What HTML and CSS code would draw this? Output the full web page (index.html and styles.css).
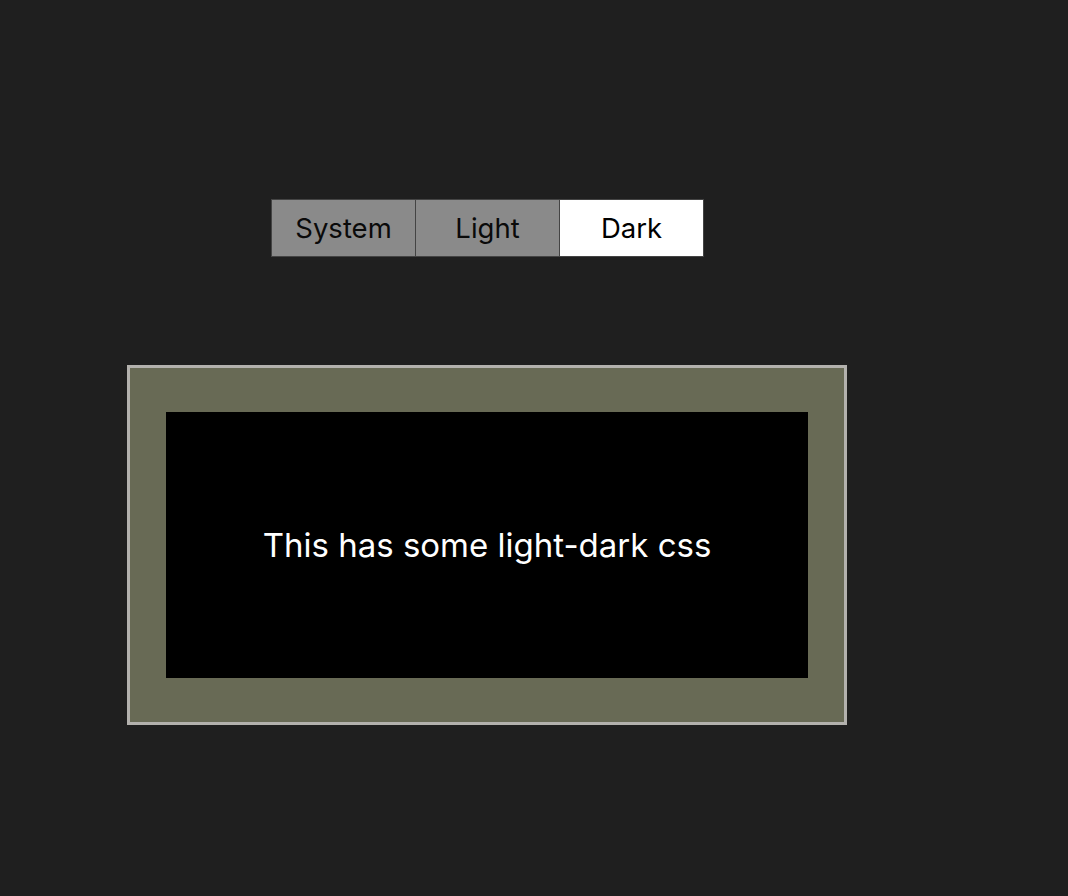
FILE: index.html
```html
<!DOCTYPE html>
<html>
<head>
<meta charset="utf-8">
<link rel="stylesheet" href="styles.css">
</head>
<body>
<main class="page">
  <div class="switcher">
    <button class="opt">System</button>
    <button class="opt">Light</button>
    <button class="opt active">Dark</button>
  </div>
  <div class="frame">
    <div class="panel">This has some light-dark css</div>
  </div>
</main>
</body>
</html>
```
FILE: styles.css
```css
html, body {
  margin: 0;
  padding: 0;
  background: #1f1f1f;
  font-family: "Inter", "Noto Sans", sans-serif;
}
.page {
  width: 720px;
  margin-left: 127px;
  padding-top: 199px;
  display: flex;
  flex-direction: column;
  align-items: center;
  gap: 108px;
}
.switcher {
  display: flex;
  margin-left: 1px;
}
.opt {
  width: 145px;
  height: 58px;
  margin: 0 0 0 -1px;
  background: #8a8a8a;
  color: #0a0a0a;
  border: 1px solid #444;
  font-family: inherit;
  font-size: 27.5px;
  padding: 0;
}
.opt:first-child { margin-left: 0; }
.opt.active {
  background: #fff;
  color: #000;
}
.frame {
  box-sizing: border-box;
  width: 720px;
  height: 360px;
  border: 3px solid #b3b1ad;
  background: #686a55;
  padding: 44px 36px;
}
.panel {
  height: 100%;
  background: #000;
  color: #fff;
  font-size: 33px;
  display: flex;
  align-items: center;
  justify-content: center;
}
```
